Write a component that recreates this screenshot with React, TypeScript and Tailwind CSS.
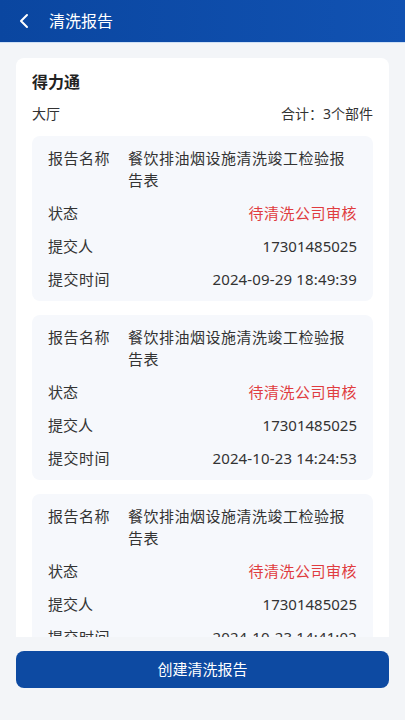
import React from 'react';

interface Report {
  name: string;
  status: string;
  submitter: string;
  time: string;
}

const reports: Report[] = [
  { name: '餐饮排油烟设施清洗竣工检验报告表', status: '待清洗公司审核', submitter: '17301485025', time: '2024-09-29 18:49:39' },
  { name: '餐饮排油烟设施清洗竣工检验报告表', status: '待清洗公司审核', submitter: '17301485025', time: '2024-10-23 14:24:53' },
  { name: '餐饮排油烟设施清洗竣工检验报告表', status: '待清洗公司审核', submitter: '17301485025', time: '2024-10-23 14:41:02' },
];

const font = { fontFamily: '"Noto Sans", "Noto Sans CJK SC", sans-serif' };

const ReportItem: React.FC<{ report: Report }> = ({ report }) => (
  <div className="rounded-lg bg-[#f6f8fc] px-4 py-[11px] flex flex-col gap-[11px] text-[15px] leading-[22px] text-[#333]">
    <div className="flex">
      <span className="w-[80px] shrink-0 tracking-[0.5px]">报告名称</span>
      <span className="flex-1 pr-3 tracking-[0.5px]">{report.name}</span>
    </div>
    <div className="flex justify-between">
      <span>状态</span>
      <span className="text-[#e03c40] tracking-[0.5px]">{report.status}</span>
    </div>
    <div className="flex justify-between">
      <span>提交人</span>
      <span>{report.submitter}</span>
    </div>
    <div className="flex justify-between">
      <span className="tracking-[0.5px]">提交时间</span>
      <span className="tracking-[0.15px]">{report.time}</span>
    </div>
  </div>
);

export default function App() {
  return (
    <div className="h-[720px] w-full flex flex-col bg-[#f3f5f8] overflow-hidden" style={font}>
      <header className="h-[43px] shrink-0 flex items-center bg-gradient-to-r from-[#0a46a0] to-[#1152b2] border-b border-[#cfe0f5] text-white">
        <svg className="ml-[18px] w-[12px] h-[16px]" viewBox="0 0 12 16" fill="none">
          <path d="M9 2 L3 8 L9 14" stroke="white" strokeWidth="2" strokeLinecap="round" strokeLinejoin="round" />
        </svg>
        <span className="ml-[19px] text-[16px]">清洗报告</span>
      </header>

      <main className="flex-1 overflow-hidden px-4 pt-[15px]">
        <div className="rounded-lg bg-white px-4 pt-[13px] pb-4">
          <div className="text-[16px] font-bold leading-[22px] text-[#222]">得力通</div>
          <div className="mt-[10px] flex justify-between text-[14px] leading-[22px] text-[#333]">
            <span>大厅</span>
            <span>合计：3个部件</span>
          </div>
          <div className="mt-[11px] flex flex-col gap-[14px]">
            {reports.map((r, i) => (
              <ReportItem key={i} report={r} />
            ))}
          </div>
        </div>
      </main>

      <footer className="h-[83px] shrink-0 px-4 pt-[14px]">
        <button className="w-full h-[37px] rounded-lg bg-[#0d4aa2] text-white text-[15px]">创建清洗报告</button>
      </footer>
    </div>
  );
}
